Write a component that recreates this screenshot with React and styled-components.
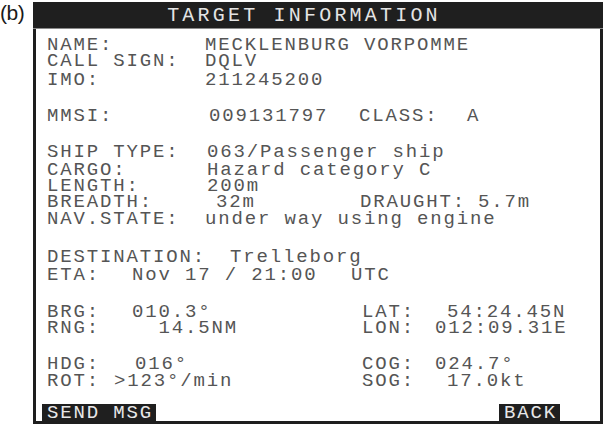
import styled, { createGlobalStyle } from "styled-components";

const GlobalStyle = createGlobalStyle`
    html, body {
        margin: 0;
        padding: 0;
        background: #ffffff;
    }
`;

const Pagina = styled.div`
    display: flex;
    flex-direction: row;
    align-items: flex-start;
    width: 603px;
    height: 426px;
    overflow: hidden;
`;

const Etiqueta = styled.div`
    width: 33px;
    padding-top: 1px;
    font-family: "Liberation Sans", Arial, sans-serif;
    font-size: 21px;
    color: #1a1a1a;
    letter-spacing: -0.5px;
`;

const Marco = styled.div`
    display: flex;
    flex-direction: column;
    box-sizing: border-box;
    margin-top: 2px;
    width: 570px;
    height: 422px;
    border: 3px solid #1e1e1e;
    border-top: none;
    background: #ffffff;
`;

const Titulo = styled.div`
    height: 26px;
    margin: 0 -3px;
    background: #1f1f1f;
    border-bottom: 1px solid #8a8a8a;
    color: #e4e4e4;
    font-family: "Liberation Mono", "Courier New", monospace;
    font-size: 20px;
    letter-spacing: 3.2px;
    line-height: 27px;
    text-align: center;
    padding-right: 28px;
    white-space: pre;
`;

const Contenido = styled.div`
    display: flex;
    flex-direction: column;
    flex: 1;
    padding: 8px 0 0 11px;
    font-family: "Liberation Mono", "Courier New", monospace;
    font-size: 19px;
    letter-spacing: 1.85px;
    color: #555555;
`;

const Fila = styled.div`
    display: grid;
    grid-template-columns: ${(p) => p.$cols || "160px auto"};
    height: 17px;
    line-height: 17px;
    margin-top: ${(p) => p.$top || 0}px;
    white-space: pre;
`;

const Botonera = styled.div`
    display: flex;
    justify-content: space-between;
    margin: auto 0 0 -5px;
    padding: 0 40px 0 0;
`;

const Boton = styled.div`
    background: #1f1f1f;
    color: #e8e8e8;
    height: 17px;
    line-height: 18px;
    padding: 0 3px 0 5px;
`;

const App = () => (
    <>
        <GlobalStyle />
        <Pagina>
            <Etiqueta>(b)</Etiqueta>
            <Marco>
                <Titulo>TARGET INFORMATION</Titulo>
                <Contenido>
                    <Fila $cols="158px auto">
                        <span>NAME:</span>
                        <span>MECKLENBURG VORPOMME</span>
                    </Fila>
                    <Fila $cols="158px auto" $top={-1}>
                        <span>CALL SIGN:</span>
                        <span>DQLV</span>
                    </Fila>
                    <Fila $cols="158px auto" $top={2}>
                        <span>IMO:</span>
                        <span>211245200</span>
                    </Fila>

                    <Fila $cols="162px 150px 108px auto" $top={19}>
                        <span>MMSI:</span>
                        <span>009131797</span>
                        <span>CLASS:</span>
                        <span>A</span>
                    </Fila>

                    <Fila $top={19}>
                        <span>SHIP TYPE:</span>
                        <span>063/Passenger ship</span>
                    </Fila>
                    <Fila $top={1}>
                        <span>CARGO:</span>
                        <span>Hazard category C</span>
                    </Fila>
                    <Fila $top={-1}>
                        <span>LENGTH:</span>
                        <span>200m</span>
                    </Fila>
                    <Fila $cols="169px 144px 118px auto" $top={-1}>
                        <span>BREADTH:</span>
                        <span>32m</span>
                        <span>DRAUGHT:</span>
                        <span>5.7m</span>
                    </Fila>
                    <Fila $cols="158px auto">
                        <span>NAV.STATE:</span>
                        <span>under way using engine</span>
                    </Fila>

                    <Fila $cols="183px auto" $top={21}>
                        <span>DESTINATION:</span>
                        <span>Trelleborg</span>
                    </Fila>
                    <Fila $cols="85px 219px auto" $top={1}>
                        <span>ETA:</span>
                        <span>Nov 17 / 21:00</span>
                        <span>UTC</span>
                    </Fila>

                    <Fila $cols="85px 230px 85px auto" $top={20}>
                        <span>BRG:</span>
                        <span>010.3°</span>
                        <span>LAT:</span>
                        <span>54:24.45N</span>
                    </Fila>
                    <Fila $cols="85px 230px 73px auto" $top={-1}>
                        <span>RNG:</span>
                        <span>  14.5NM</span>
                        <span>LON:</span>
                        <span>012:09.31E</span>
                    </Fila>

                    <Fila $cols="88px 227px 73px auto" $top={19}>
                        <span>HDG:</span>
                        <span>016°</span>
                        <span>COG:</span>
                        <span>024.7°</span>
                    </Fila>
                    <Fila $cols="67px 248px 85px auto">
                        <span>ROT:</span>
                        <span>&gt;123°/min</span>
                        <span>SOG:</span>
                        <span>17.0kt</span>
                    </Fila>

                    <Botonera>
                        <Boton>SEND MSG</Boton>
                        <Boton>BACK</Boton>
                    </Botonera>
                </Contenido>
            </Marco>
        </Pagina>
    </>
);

export default App;
